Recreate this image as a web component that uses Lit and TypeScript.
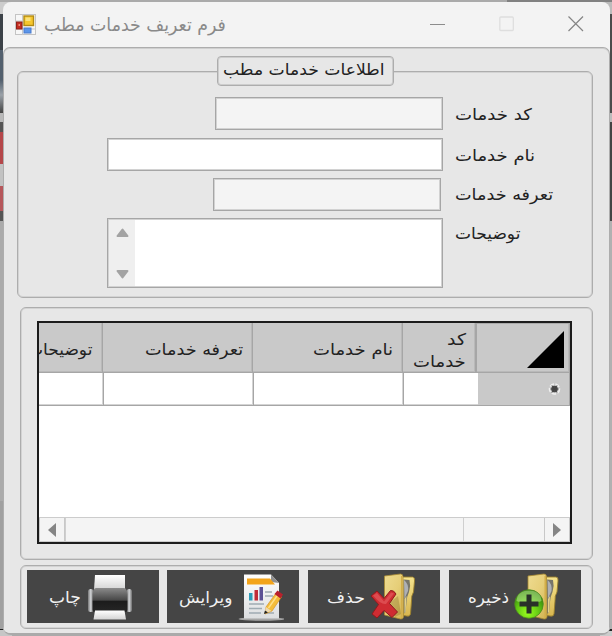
import { LitElement, html, css, svg } from "lit";
import { customElement } from "lit/decorators.js";

const folder = svg`
  <path d="M29 5 L39 5 Q41.500 5 41 9 L40 20 Q37.500 24 38 29 L37 42 Q36.500 45 33 44 L27 43 Z" fill="url(#fg2)" stroke="#9a7f2c" stroke-width=".9"/>
  <path d="M30 7.500 L36 8 Q37.500 14 35.500 20 Q33.500 24 33 30 L32 40 L30 42 Z" fill="#77756a"/>
  <path d="M30.500 8 Q35.500 12 34.500 19 Q32.500 23 31 27 Z" fill="#aeb0b4"/>
  <path d="M31 27 L33 24 L32 40 L31 41 Z" fill="#e3d28a"/>
  <path d="M11 4 L27 2 Q29.500 2 29.500 5 L30 45 Q29.500 47.500 27 47 L11 43 Z" fill="url(#fg)" stroke="#a88a32" stroke-width=".8"/>
  <path d="M27.500 4 L29 4 L29 46 L27.500 46 Z" fill="#d3ae4a"/>`;

const defs = svg`<defs>
  <linearGradient id="fg" x1="0" y1="0" x2="1" y2="1"><stop offset="0" stop-color="#eedb90"/><stop offset=".5" stop-color="#e6ce78"/><stop offset="1" stop-color="#d0b050"/></linearGradient>
  <linearGradient id="fg2" x1="0" y1="0" x2="0" y2="1"><stop offset="0" stop-color="#f6e48e"/><stop offset="1" stop-color="#d8b650"/></linearGradient>
</defs>`;

const saveIcon = html`<svg class="ico" width="46" height="50" viewBox="0 0 46 50">
  ${defs}
  <g transform="translate(3 0)">${folder}</g>
  <defs><radialGradient id="gr" cx=".45" cy=".8" r=".75"><stop offset="0" stop-color="#9aff1f"/><stop offset=".55" stop-color="#5fc413"/><stop offset="1" stop-color="#2f7d0c"/></radialGradient></defs>
  <circle cx="15" cy="32" r="14.300" fill="url(#gr)" stroke="#4e8a20" stroke-width=".8"/>
  <path d="M2.500 29 Q3 19 15 18.500 Q27 19 27.500 29 Q15 35 2.500 29Z" fill="#c8efa2" opacity=".5"/>
  <path d="M12.500 22.500 h5 v7 h7 v5 h-7 v7 h-5 v-7 h-7 v-5 h7 Z" fill="#293129"/>
</svg>`;

const deleteIcon = html`<svg class="ico" width="46" height="50" viewBox="0 0 46 50">
  ${defs}
  <g transform="translate(3.500 0)">${folder}</g>
  <path d="M19 31 L28 24 L31 42 L25 45 Z" fill="#77601f" opacity=".3"/>
  <path d="M1 24 L7 19 L14 26.500 L20.500 18.500 Q24 18 26 22 L19.500 31.500 L27.500 40 L22 45.500 L14 38.500 L7 46 L2 42 L8.500 32.500 Z" fill="#cf2c32" stroke="#8c1a1d" stroke-width="1"/>
  <path d="M3 23.500 L7 21 L14 29.500 L21 20.500 L24 21.500 L16 32 Q11 33 3 23.500Z" fill="#ee7475" opacity=".45"/>
</svg>`;

const editIcon = html`<svg class="ico" width="46" height="50" viewBox="0 0 46 50">
  <defs><linearGradient id="pg" x1="0" y1="0" x2="0" y2="1"><stop offset="0" stop-color="#fff"/><stop offset="1" stop-color="#dcdee0"/></linearGradient></defs>
  <ellipse cx="23.500" cy="47" rx="23" ry="1.800" fill="#a5a5a5"/>
  <path d="M6 2.500 H33 L41 11 V46.500 H6 Z" fill="url(#pg)"/>
  <path d="M33 2.500 L41 11 L33 10 Z" fill="#8f8f8f"/>
  <path d="M9 6.500 H32 L37 12.500 H9 Z" fill="#f3a41a"/>
  <rect x="11" y="21" width="3.500" height="7.500" fill="#2d9bb8"/>
  <rect x="16.500" y="18" width="3.500" height="10.500" fill="#c22c37"/>
  <rect x="21.500" y="15" width="3.500" height="13.500" fill="#5c5195"/>
  <path d="M27 20h7M27 24h8M11 32h15M11 36.500h13M11 41h12M26 41h10" stroke="#9fabb2" stroke-width="1.300"/>
  <path d="M28 35 L38 21 L43.500 25 L34 39 L27 42 Z" fill="#f4bd3a" stroke="#d08a1c" stroke-width=".6"/>
  <path d="M30.500 36 L40 22.500" stroke="#ffe08a" stroke-width="1.400"/>
  <path d="M28 35 L33.500 39 L26.500 41.500 Z" fill="#efd9ae"/><path d="M27 38.500 L30 40.500 L26 42 Z" fill="#222"/>
  <path d="M36.500 22 L39.500 18.500 L45 22.500 L42.500 26.500 Z" fill="#b9202c"/>
</svg>`;

const printIcon = html`<svg class="ico" width="46" height="50" viewBox="0 0 46 50">
  <defs>
    <linearGradient id="pb" x1="0" y1="0" x2="0" y2="1"><stop offset="0" stop-color="#8b8b8b"/><stop offset=".5" stop-color="#484848"/><stop offset=".56" stop-color="#1c1c1c"/><stop offset="1" stop-color="#262626"/></linearGradient>
    <linearGradient id="pe" x1="0" y1="0" x2="1" y2="0"><stop offset="0" stop-color="#777"/><stop offset=".5" stop-color="#d2d4d7"/><stop offset="1" stop-color="#6e6e6e"/></linearGradient>
    <linearGradient id="pp" x1="0" y1="0" x2="0" y2="1"><stop offset="0" stop-color="#fff"/><stop offset="1" stop-color="#d3d3d3"/></linearGradient>
  </defs>
  <path d="M8 3 H38 V18 H7 Z" fill="url(#pp)"/>
  <rect x="1" y="17" width="5.500" height="23" rx="2.500" fill="url(#pe)"/>
  <rect x="39.500" y="17" width="5.500" height="23" rx="2.500" fill="url(#pe)"/>
  <path d="M9 16 H37 Q40 16.500 40.500 22 V38 Q40.500 40 38.500 40 H7.500 Q5.500 40 5.500 38 V22 Q6 16.500 9 16 Z" fill="url(#pb)"/>
  <path d="M8 38.500 H37.500 L39 47.500 H6.500 Z" fill="url(#pp)"/>
</svg>`;

/** A single line of text stretched horizontally to a given width. */
@customElement("fit-text")
export class FitText extends LitElement {
  static properties = { w: { type: Number } };
  declare w: number;
  static styles = css`
    :host { display: block; flex: none; text-align: left; direction: ltr; }
    span { display: inline-block; white-space: nowrap; transform-origin: 0 50%; }
  `;
  firstUpdated() {
    const s = this.renderRoot.querySelector("span") as HTMLElement;
    this.style.width = `${this.w}px`;
    s.style.transform = `scaleX(${this.w / s.offsetWidth})`;
  }
  render() {
    return html`<span dir="rtl"><slot></slot></span>`;
  }
}

@customElement("app-root")
export class AppRoot extends LitElement {
  static styles = css`
    :host { display: block; width: 612px; height: 636px; overflow: hidden; font-family: "DejaVu Sans", "Noto Sans", sans-serif; font-size: 16px; color: #222; }
    * { box-sizing: border-box; }
    .desk { width: 612px; height: 636px; padding: 2px 2px 1px 3px; background:
      linear-gradient(#aaa, #aaa) 0 0 / 507px 2px no-repeat,
      linear-gradient(#818181, #818181) 507px 0 / 105px 2px no-repeat,
      linear-gradient(#ccc 0 14px, #3c4248 14px 50px, #53606e 50px 80px, #9aa1a8 95px, #444 113px, #b9b9b9 113px 122px, #555 122px 132px, #b5474a 132px 164px, #c2c2c2 164px 186px, #b6575b 186px 211px, #555 211px 221px, #ababab 221px 501px, #a0a0a0 501px 629px, #222 629px 630px, #c6c6c6 630px) 0 0 / 12px 636px no-repeat,
      linear-gradient(#bbb 0 14px, #4b4b4b 14px 113px, #bbb 113px 122px, #444 122px 221px, #b1b1b1 221px 629px, #222 629px 631px, #ccc 631px) 600px 0 / 12px 636px no-repeat, #aaa; }
    .window { height: 633px; background: #f3f3f3; border-radius: 8px; border-bottom: 2px solid #aaa; overflow: hidden; display: flex; flex-direction: column; }
    .bar { height: 45px; flex: none; display: flex; align-items: center; padding: 0 26px 0 12px; color: #8a8a8a; }
    .bar svg { flex: none; }
    .title { flex: 1; padding-left: 8px; font-size: 18px; line-height: 28px; }
    .ctrls { display: flex; gap: 54px; align-items: center; padding-bottom: 2px; }
    .client { flex: 1; background: #e7e7e7; border: 1px solid #adadad; border-bottom: 0; box-shadow: inset 0 1px #cfcfcf; border-radius: 7px 7px 0 0; padding: 23px 14px 0 14px; display: flex; flex-direction: column; }
    .box { border: 1px solid #adadad; box-shadow: inset 0 0 0 1px #d3d3d3; border-radius: 6px; flex: none; }
    .info { position: relative; width: 576px; height: 227px; margin-left: -1px; padding: 25px 0 0 89px; display: flex; flex-direction: column; }
    .legend { position: absolute; left: 199px; top: -16px; width: 177px; height: 30px; border: 1px solid #adadad; box-shadow: inset 0 0 0 1px #cdcdcd; border-radius: 4px; background: #e7e7e7; padding-left: 5px; line-height: 26px; }
    .line { display: flex; height: 33px; margin-bottom: 7.500px; }
    .last { margin-top: -1px; }
    .slot { width: 336px; display: flex; justify-content: flex-end; }
    .field { height: 33px; border: 1px solid #a6a6a6; box-shadow: inset 0 0 0 1px #d2d2d2; background: #fff; }
    .ro { background: #f4f4f4; }
    .w1 { width: 228px; } .w2 { width: 336px; } .w3 { width: 228px; margin-right: 2px; }
    .memo { width: 336px; height: 70px; padding: 1px; display: flex; }
    .scroll { width: 26px; background: #efefef; display: flex; flex-direction: column; justify-content: space-between; align-items: center; padding: 8px 0 7px 1px; }
    .lab { margin-left: 12px; line-height: 35px; }
    .tight { line-height: 33px; }
    .up { line-height: 32px; }
    .data { width: 573px; height: 253px; margin: 9px 0 0 2px; padding: 13px 0 0 16px; }
    .grid { width: 535px; height: 223px; border: 2px solid #1c1c1c; background: #fff; display: flex; flex-direction: column; overflow: hidden; }
    .row { display: flex; height: 33px; flex: none; }
    .head { height: 50px; background: #c9c9c9; line-height: 22px; }
    .c { border-bottom: 1px solid #a6a6a6; border-right: 1px solid #a6a6a6; box-shadow: inset -1px -1px #d4d4d4; padding-right: 9px; display: flex; align-items: center; justify-content: flex-end; flex: none; overflow: hidden; }
    .stack { display: flex; flex-direction: column; align-items: flex-end; }
    .h0 { width: 64px; padding-right: 10px; } .h1 { width: 149.500px; } .h2 { width: 150px; } .h3 { width: 74.500px; border-right-width: 2px; } .h4 { width: 93px; padding-right: 5px; }
    .head .c { padding-top: 5px; box-shadow: inset -1px -1px #b9b9b9; }
    .head .h3 { padding-top: 6px; }
    .head .h4 { padding-top: 3px; border-top: 1px solid #aaa; }
    .r0 { width: 65px; } .r1 { width: 150px; } .r2 { width: 150px; } .r3 { width: 74px; border-right: none; box-shadow: inset 0 -1px #d4d4d4; } .r4 { width: 92px; background: #c9c9c9; padding-right: 8px; box-shadow: none; }
    .space { flex: 1; }
    .hs { height: 25px; display: flex; background: #f4f4f4; border-top: 1px solid #ccc; border-bottom: 1px solid #ccc; }
    .hb { width: 26px; display: flex; align-items: center; justify-content: center; border: 1px solid #c8c8c8; border-width: 0 1px; }
    .thumb { width: 399px; border: 1px solid #cfcfcf; border-width: 0 1px; }
    .gap { flex: 1; }
    .foot { width: 573px; height: 64px; margin: 5px 0 0 2px; padding: 4px 0 0 6px; display: flex; gap: 9px; }
    .btn { width: 132px; height: 53px; background: #454545; border: 0; padding: 0; display: flex; align-items: center; justify-content: flex-end; color: #f2f2f2; font: inherit; line-height: 28px; }
    .btn fit-text { padding-top: 3px; }
    .b1 { padding-right: 26px; gap: 6px; margin-right: -1px; } .b2 { padding-right: 15px; gap: 6px; } .b3 { padding-right: 24px; gap: 5px; } .b4 { padding-right: 21px; gap: 5px; }
    .ico { flex: none; }
  `;

  render() {
    return html`<div class="desk"><div class="window">
      <header class="bar">
        <svg width="21" height="21" viewBox="0 0 21 21"><rect x=".5" y=".5" width="20" height="20" fill="#f7f7f7" stroke="#c4c4c4"/><path d="M7.500 0v21M0 7h8M0 15h21" stroke="#c9c9c9"/><rect x="1.500" y="8" width="5.500" height="7" fill="#c42b20" stroke="#8e2018"/><rect x="3.500" y="10" width="1.500" height="2" fill="#e98a78"/><rect x="9" y="2" width="9.500" height="9.500" fill="#f6c62c" stroke="#b28a14" stroke-width="1.400"/><rect x="10.500" y="3.500" width="5" height="3.500" fill="#fae27c"/><rect x="9" y="14" width="7" height="5" fill="#5c96ea" stroke="#4a7bcc"/></svg>
        <div class="title"><fit-text w="182">فرم تعریف خدمات مطب</fit-text></div>
        <div class="ctrls">
          <svg width="15" height="16"><path d="M0 8.500h15" stroke="#8c8c8c"/></svg>
          <svg width="15" height="16"><rect x=".8" y="1" width="13.500" height="13.500" rx="1" fill="none" stroke="#dedede" stroke-width="1.300"/></svg>
          <svg width="16" height="16"><path d="M.5 .5l14.500 14.500M15 .5L.5 15" stroke="#858585" stroke-width="1.200"/></svg>
        </div>
      </header>
      <main class="client">
        <section class="box info">
          <div class="legend"><fit-text w="162">اطلاعات خدمات مطب</fit-text></div>
          <div class="line"><div class="slot"><div class="field ro w1"></div></div><fit-text class="lab" w="77">کد خدمات</fit-text></div>
          <div class="line"><div class="slot"><div class="field w2"></div></div><fit-text class="lab" w="80">نام خدمات</fit-text></div>
          <div class="line"><div class="slot"><div class="field ro w3"></div></div><fit-text class="lab tight" w="98">تعرفه خدمات</fit-text></div>
          <div class="line last"><div class="field memo"><div class="scroll">
            <svg width="13" height="10"><path d="M6.500 1.500L11.500 8H1.500Z" fill="#a3a3a3" stroke="#a3a3a3" stroke-width="2" stroke-linejoin="round"/></svg>
            <svg width="13" height="10"><path d="M6.500 8.500L11.500 2H1.500Z" fill="#a3a3a3" stroke="#a3a3a3" stroke-width="2" stroke-linejoin="round"/></svg>
          </div></div><fit-text class="lab up" w="65">توضیحات</fit-text></div>
        </section>
        <section class="box data">
          <div class="grid">
            <div class="row head">
              <div class="c h0"><fit-text w="65">توضیحات</fit-text></div>
              <div class="c h1"><fit-text w="98">تعرفه خدمات</fit-text></div>
              <div class="c h2"><fit-text w="80">نام خدمات</fit-text></div>
              <div class="c h3"><div class="stack"><fit-text w="19">کد</fit-text><fit-text w="53">خدمات</fit-text></div></div>
              <div class="c h4"><svg width="37" height="37"><path d="M37 0V37H0Z" fill="#000"/></svg></div>
            </div>
            <div class="row">
              <div class="c r0"></div><div class="c r1"></div><div class="c r2"></div><div class="c r3"></div>
              <div class="c r4"><svg width="13" height="14"><circle cx="6.500" cy="7" r="5" fill="none" stroke="#f0f0f0" stroke-width="1.600" stroke-dasharray="4.500 1.500"/><circle cx="6.500" cy="7" r="3.200" fill="#4a4a4a"/><path d="M2.500 7h8M4 3.500l5 7M9 3.500l-5 7" stroke="#444"/></svg></div>
            </div>
            <div class="space"></div>
            <div class="hs">
              <div class="hb"><svg width="8" height="14"><path d="M8 0V14L0 7Z" fill="#858585"/></svg></div>
              <div class="thumb"></div><div class="gap"></div>
              <div class="hb"><svg width="8" height="14"><path d="M0 0V14L8 7Z" fill="#858585"/></svg></div>
            </div>
          </div>
        </section>
        <footer class="box foot">
          <button class="btn b1"><fit-text w="32">چاپ</fit-text>${printIcon}</button>
          <button class="btn b2"><fit-text w="53">ویرایش</fit-text>${editIcon}</button>
          <button class="btn b3"><fit-text w="38">حذف</fit-text>${deleteIcon}</button>
          <button class="btn b4"><fit-text w="41">ذخیره</fit-text>${saveIcon}</button>
        </footer>
      </main>
    </div></div>`;
  }
}
